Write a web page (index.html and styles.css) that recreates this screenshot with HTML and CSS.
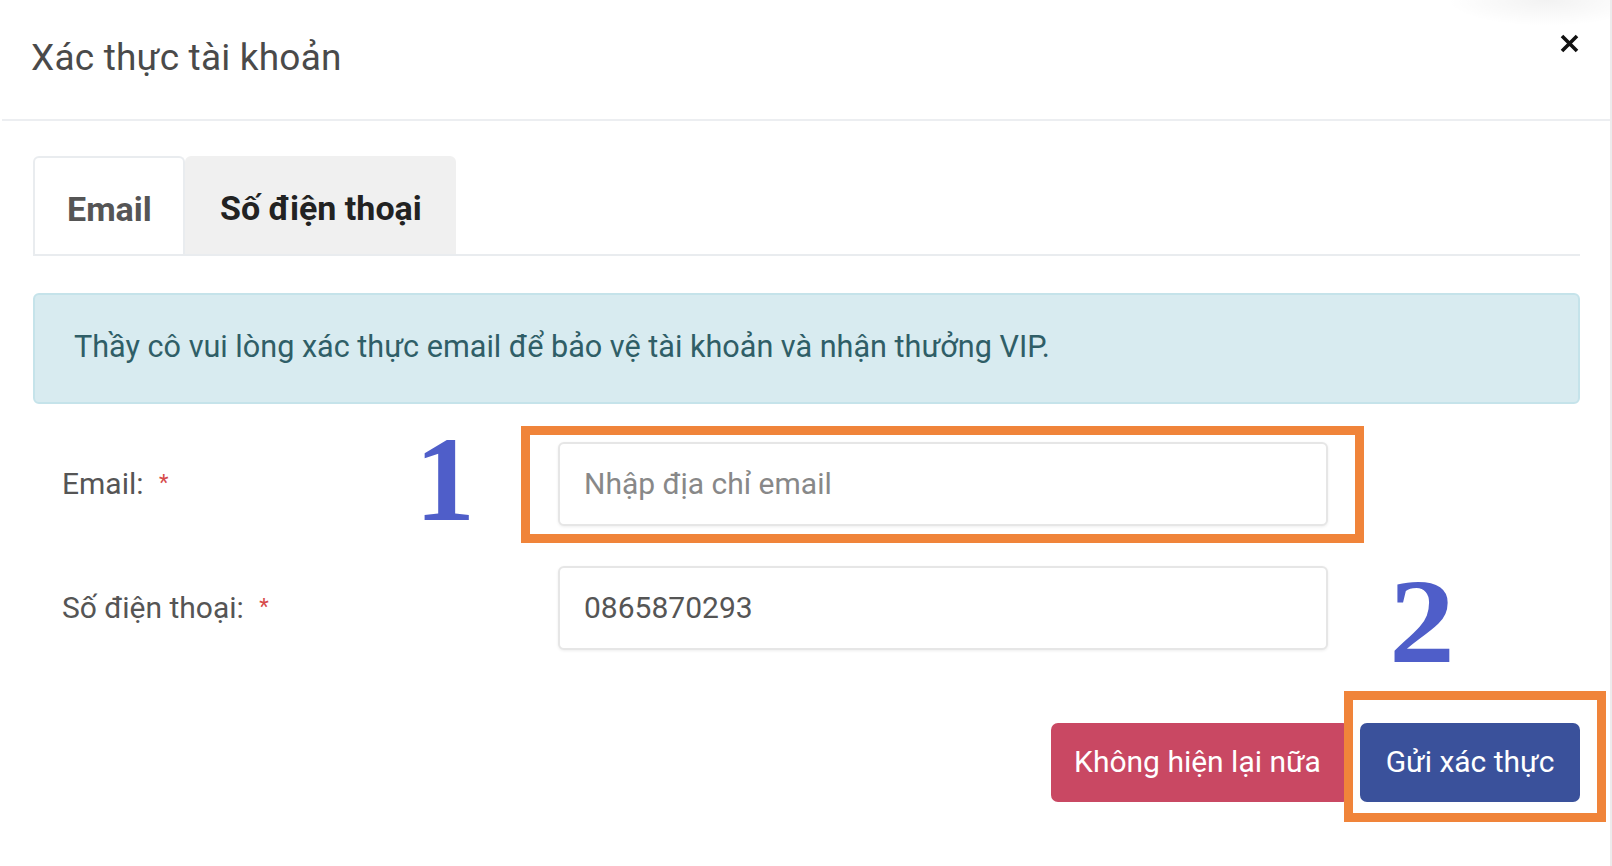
FILE: index.html
```html
<!DOCTYPE html>
<html lang="vi">
<head>
<meta charset="utf-8">
<title>Xác thực tài khoản</title>
<link rel="stylesheet" href="styles.css">
</head>
<body>
<div class="modal">
  <div class="modal-header">
    <h1 class="modal-title">Xác thực tài khoản</h1>
    <button class="close" type="button" aria-label="Close">
      <svg width="21" height="21" viewBox="0 0 21 21"><path d="M3 3 L18 18 M18 3 L3 18" stroke="#111" stroke-width="3.6" stroke-linecap="butt"/></svg>
    </button>
  </div>
  <div class="modal-body">
    <div class="tabs">
      <div class="tab tab-active">Email</div>
      <div class="tab tab-grey">Số điện thoại</div>
    </div>
    <div class="alert">Thầy cô vui lòng xác thực email để bảo vệ tài khoản và nhận thưởng VIP.</div>
    <div class="form">
      <div class="row">
        <label class="label">Email: <span class="req">*</span></label>
        <span class="step step-1">1</span>
        <div class="field">
          <input class="input" type="text" placeholder="Nhập địa chỉ email">
          <span class="highlight hl-1"></span>
        </div>
      </div>
      <div class="row">
        <label class="label">Số điện thoại: <span class="req">*</span></label>
        <span class="step step-2">2</span>
        <div class="field">
          <input class="input" type="text" value="0865870293">
        </div>
      </div>
    </div>
    <div class="actions">
      <button class="btn btn-red" type="button">Không hiện lại nữa</button>
      <div class="btn-wrap">
        <button class="btn btn-blue" type="button">Gửi xác thực</button>
        <span class="highlight hl-2"></span>
      </div>
    </div>
  </div>
</div>
</body>
</html>
```

FILE: styles.css
```css
html, body {
  margin: 0;
  padding: 0;
  background: #ffffff;
}
body {
  font-family: Roboto, "Liberation Sans", sans-serif;
}
.modal {
  position: relative;
  width: 1610px;
  height: 866px;
  border-right: 2px solid #ececec;
  background: #fff;
}
.modal-header {
  height: 121px;
  margin-left: 2px;
  border-bottom: 2px solid #eceef1;
  display: flex;
  align-items: center;
  justify-content: space-between;
  padding: 0 30px 4px 29px;
  box-sizing: border-box;
  background: radial-gradient(ellipse 100px 26px at 1545px 0, rgba(0,0,0,0.05), rgba(0,0,0,0));
}
.modal-title {
  margin: 0;
  font-size: 37px;
  font-weight: 400;
  color: #4a4a4a;
  letter-spacing: 0.2px;
}
.close {
  border: 0;
  background: transparent;
  padding: 0;
  margin: 0 0 28px 0;
  width: 21px;
  height: 21px;
  display: flex;
}
.modal-body {
  padding: 35px 30px 0 33px;
}
.tabs {
  display: flex;
  height: 98px;
  border-bottom: 2px solid #e9ecef;
}
.tab {
  display: flex;
  align-items: center;
  padding: 6px 34px 0;
  font-size: 34px;
  font-weight: 700;
  border-radius: 6px 6px 0 0;
  box-sizing: border-box;
  height: 98px;
}
.tab-active {
  width: 152px;
  color: #555;
  border: 2px solid #e9ecef;
  border-bottom: 0;
  background: #fff;
  padding-left: 32px;
}
.tab-grey {
  width: 271px;
  color: #222;
  background: #f0f0f0;
  padding-left: 35px;
}
.alert {
  margin-top: 37px;
  height: 111px;
  box-sizing: border-box;
  background: #d8ebf0;
  border: 2px solid #c5e3ea;
  border-radius: 6px;
  display: flex;
  align-items: center;
  padding: 0 0 4px 39px;
  font-size: 30.6px;
  color: #2f5e67;
}
.form {
  margin-top: 38px;
  display: flex;
  flex-direction: column;
  gap: 40px;
}
.row {
  position: relative;
  display: flex;
  align-items: center;
  height: 84px;
}
.label {
  width: 525px;
  padding-left: 29px;
  box-sizing: border-box;
  font-size: 30px;
  color: #555;
  padding-bottom: 2px;
}
.req {
  color: #d64a4a;
  font-size: 22px;
  vertical-align: 4px;
  margin-left: 8px;
}
.field {
  position: relative;
  width: 770px;
  height: 84px;
}
.input {
  width: 100%;
  height: 100%;
  box-sizing: border-box;
  border: 2px solid #e6e6e6;
  border-radius: 6px;
  box-shadow: 0 1px 3px rgba(0,0,0,0.07);
  padding: 0 0 2px 24px;
  font-family: Roboto, "Liberation Sans", sans-serif;
  font-size: 30px;
  color: #555;
  background: #fff;
  outline: none;
}
.input::placeholder {
  color: #888;
}
.highlight {
  position: absolute;
  border: 9px solid #f0843a;
  pointer-events: none;
}
.hl-1 {
  left: -37px;
  right: -36px;
  top: -16px;
  bottom: -17px;
}
.step {
  position: absolute;
  font-family: "Liberation Serif", "Times New Roman", serif;
  font-weight: 700;
  font-size: 120px;
  line-height: 1;
  color: #4f5ec9;
}
.step-1 {
  left: 382px;
  top: -22px;
}
.step-2 {
  left: 1356px;
  top: -4px;
  transform: scaleX(1.1);
  transform-origin: left top;
}
.actions {
  margin-top: 73px;
  display: flex;
  justify-content: flex-end;
  gap: 10px;
}
.btn {
  height: 79px;
  border: 0;
  border-radius: 7px;
  color: #fff;
  font-family: Roboto, "Liberation Sans", sans-serif;
  font-size: 30px;
  padding: 0 0 2px 0;
}
.btn-red {
  width: 299px;
  background: #c94863;
  padding-right: 6px;
}
.btn-wrap {
  position: relative;
}
.btn-blue {
  width: 220px;
  background: #3a519b;
}
.hl-2 {
  left: -16px;
  right: -26px;
  top: -32px;
  bottom: -20px;
  background: transparent;
}
```
